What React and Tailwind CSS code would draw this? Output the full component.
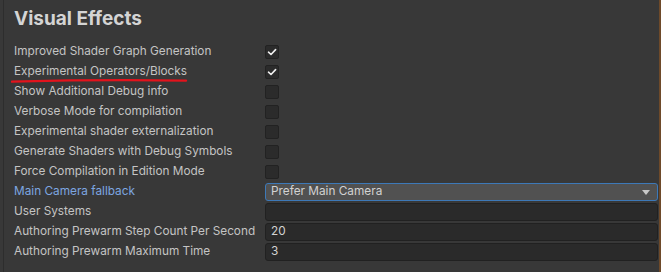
const rows = [
  { label: 'Improved Shader Graph Generation', type: 'check', checked: true },
  { label: 'Experimental Operators/Blocks', type: 'check', checked: true, marked: true },
  { label: 'Show Additional Debug info', type: 'check' },
  { label: 'Verbose Mode for compilation', type: 'check' },
  { label: 'Experimental shader externalization', type: 'check' },
  { label: 'Generate Shaders with Debug Symbols', type: 'check' },
  { label: 'Force Compilation in Edition Mode', type: 'check' },
  { label: 'Main Camera fallback', type: 'select', value: 'Prefer Main Camera', highlight: true },
  { label: 'User Systems', type: 'text', value: '' },
  { label: 'Authoring Prewarm Step Count Per Second', type: 'text', value: '20' },
  { label: 'Authoring Prewarm Maximum Time', type: 'text', value: '3' },
];

const Check = ({ checked }) => (
  <div className="flex h-[14px] w-[14px] items-center justify-center rounded-[2px] border border-[#222222] bg-[#2b2b2b]">
    {checked && (
      <svg width="10" height="10" viewBox="0 0 10 10" fill="none">
        <path d="M1.5 5.2 L4 7.5 L8.6 2.6" stroke="#eeeeee" strokeWidth="1.6" strokeLinecap="round" strokeLinejoin="round" />
      </svg>
    )}
  </div>
);

const Field = ({ row }) => {
  if (row.type === 'check') return <Check checked={row.checked} />;
  if (row.type === 'select')
    return (
      <div className="flex h-[18px] w-full items-center justify-between rounded-[3px] border border-[#3d79b8] bg-[#515151] pl-[5px] pr-[7px] text-[#d2d2d2]">
        <span>{row.value}</span>
        <svg width="8" height="5" viewBox="0 0 8 5">
          <path d="M0 0 H8 L4 5 Z" fill="#c8c8c8" />
        </svg>
      </div>
    );
  return (
    <div className="flex h-[18px] w-full items-center rounded-[3px] border border-[#212121] bg-[#2a2a2a] px-[5px] text-[#d2d2d2]">
      {row.value}
    </div>
  );
};

export default function App() {
  return (
    <div className="flex h-[272px] w-[661px] bg-[#383838] font-['Inter','Noto_Sans',sans-serif] text-[11.8px]">
      <div className="ml-[3px] w-px bg-[#2d2d2d]" />
      <div className="flex-1 pl-[10px] pr-[1px]">
        <h1 className="pt-[5px] pb-[9px] text-[19px] font-bold leading-[28px] text-[#d4d4d4]">Visual Effects</h1>
        {rows.map((row) => (
          <div key={row.label} className="flex h-[20px] items-center">
            <div className={`relative w-[251px] shrink-0 ${row.highlight ? 'text-[#7da6e0]' : 'text-[#c4c4c4]'}`}>
              {row.label}
              {row.marked && (
                <svg className="absolute left-[-3px] top-[15px]" width="180" height="6" viewBox="0 0 180 6" fill="none">
                  <path d="M1 3.6 C50 2.4 120 1.8 175 2.6" stroke="#e3131c" strokeWidth="2.4" strokeLinecap="round" />
                </svg>
              )}
            </div>
            <Field row={row} />
          </div>
        ))}
      </div>
      <div className="w-[2px] bg-[#6e4a2a]" />
    </div>
  );
}
